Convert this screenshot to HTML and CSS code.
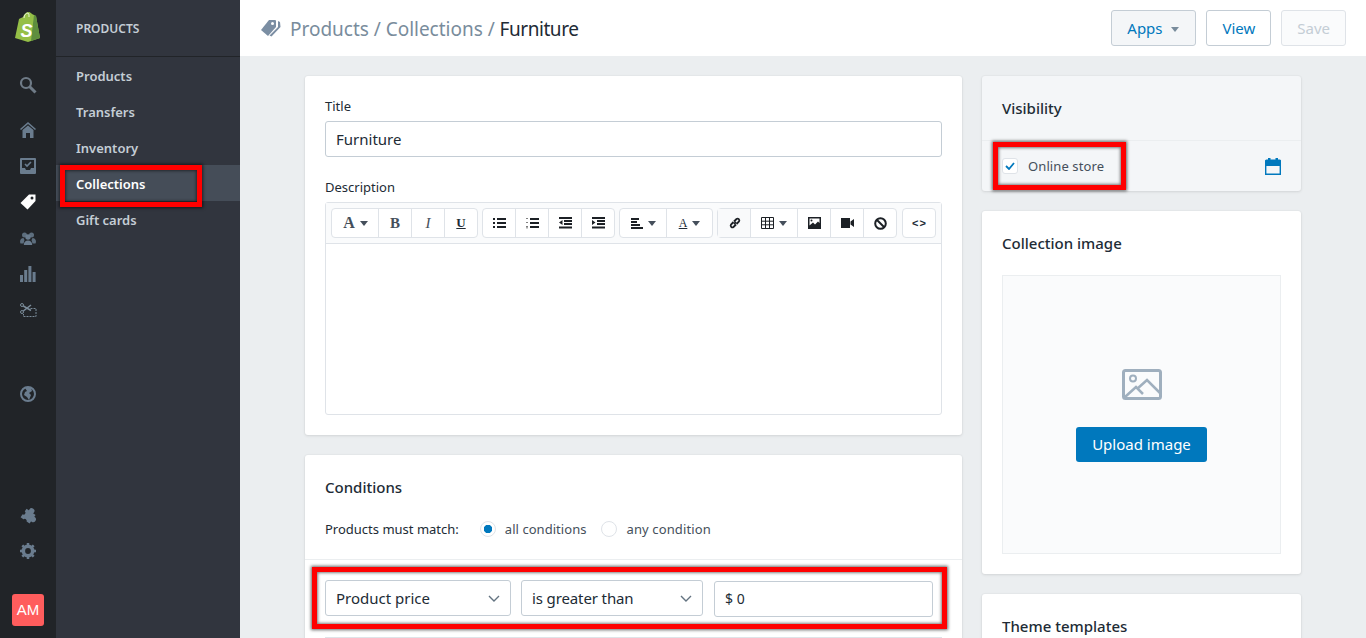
FILE: index.html
```html
<!DOCTYPE html>
<html lang="en">
<head>
<meta charset="utf-8">
<title>Furniture</title>
<link rel="stylesheet" href="styles.css">
</head>
<body>
<div class="app">
  <nav class="rail">
    <div class="logo">
      <svg width="28" height="30" viewBox="0 0 28 30"><path d="M1 26 5 7c1-1 3-1 4-2 1-3 3-5 6-5 1 0 2 1 3 2l2 1 2 1 4 22-12 4z" fill="#95bf47"/><path d="M20 3l2 1 4 22-9 3 3-26z" fill="#5e8e3e"/><path d="M10 6c0-3 2-5 4-5M15 5c0-2 0-3-1-4" fill="none" stroke="#fff" stroke-width=".8"/><text x="6.500" y="25" class="logo-s">S</text></svg>
    </div>
    <a class="rail-item rail-search"><svg width="18" height="18" viewBox="0 0 18 18"><circle cx="7" cy="7" r="5" fill="none" stroke="#6f7b87" stroke-width="2.200"/><path d="M10.500 10.500 16.500 16.500" stroke="#6f7b87" stroke-width="3"/></svg></a>
    <a class="rail-item"><svg width="16" height="16" viewBox="0 0 16 16"><path d="M8 0 0 7l1 1 7-6 7 6 1-1z" fill="#6a7c8e"/><path d="M2.500 8 8 3.500 13.500 8v8H10v-5H6v5H2.500z" fill="#6a7c8e"/></svg></a>
    <a class="rail-item"><svg width="16" height="16" viewBox="0 0 16 16"><path d="M1 0h14a1 1 0 0 1 1 1v14a1 1 0 0 1-1 1H1a1 1 0 0 1-1-1V1a1 1 0 0 1 1-1zm1 2v8h3l1 2h4l1-2h3V2z" fill="#6a7c8e"/><path d="M5 6l2 2 4-4" fill="none" stroke="#6a7c8e" stroke-width="1.600"/></svg></a>
    <a class="rail-item"><svg width="16" height="16" viewBox="0 0 16 16"><path d="M9 .5h6.500v6.500L7.500 15.500 .5 9z" fill="#fff"/><circle cx="12" cy="4" r="1.500" fill="#212428"/></svg></a>
    <a class="rail-item"><svg width="16" height="13" viewBox="0 0 16 13"><g fill="#5d6e7e"><circle cx="4.500" cy="3" r="2.500"/><circle cx="11.500" cy="3" r="2.500"/><path d="M0 10c0-2.500 1.500-4 3.500-4l1 2-1 3.500H.5zM16 10c0-2.500-1.500-4-3.500-4l-1 2 1 3.500h3z"/></g><g fill="#6a7c8e"><circle cx="8" cy="5" r="2.700"/><path d="M3.800 13c0-3 1.700-4.500 4.200-4.500s4.200 1.500 4.200 4.500z"/></g></svg></a>
    <a class="rail-item"><svg width="16" height="16" viewBox="0 0 16 16"><path d="M0 9h3v7H0zM4.200 4h3v12h-3zM8.400 0h3v16h-3zM12.600 6h3v10h-3z" fill="#6a7c8e"/></svg></a>
    <a class="rail-item"><svg width="17" height="14" viewBox="0 0 17 14"><g fill="none" stroke="#7a8b99"><circle cx="2" cy="2" r="1.500"/><circle cx="2" cy="9" r="1.500"/><path d="M3.300 3 11 7.500M3.300 8 11 2" stroke-width="1.500"/><path d="M10.500 5.500h5.500v8H3.500V11" stroke-dasharray="2 1"/></g></svg></a>
    <a class="rail-item rail-globe"><svg width="16" height="16" viewBox="0 0 16 16"><circle cx="8" cy="8" r="7" fill="#212428" stroke="#6a7c8e" stroke-width="2"/><path d="M5 2h6l1 3-3 2 2 2-2 5-2-3-3-2 1-3 2-1z" fill="#6a7c8e"/></svg></a>
    <a class="rail-item rail-puzzle"><svg width="17" height="17" viewBox="0 0 17 17"><g transform="rotate(35 8.500 8.500)"><rect x="3" y="4" width="11" height="10.500" fill="#6a7c8e"/><circle cx="8.500" cy="3" r="2.800" fill="#6a7c8e"/><circle cx="14.500" cy="9" r="2.800" fill="#6a7c8e"/><circle cx="3" cy="9" r="1.800" fill="#212428"/><circle cx="8.500" cy="14.800" r="1.800" fill="#212428"/></g></svg></a>
    <a class="rail-item"><svg width="16" height="16" viewBox="0 0 16 16"><circle cx="8" cy="8" r="4.700" fill="none" stroke="#6a7c8e" stroke-width="3.600"/><path d="M8 0v3M8 13v3M0 8h3M13 8h3M2.300 2.300l2.200 2.200M11.500 11.500l2.200 2.200M2.300 13.700l2.200-2.200M11.500 4.500l2.200-2.200" stroke="#6a7c8e" stroke-width="2.500"/></svg></a>
    <div class="avatar">AM</div>
  </nav>

  <aside class="subnav">
    <div class="subnav-head">PRODUCTS</div>
    <ul class="subnav-list">
      <li class="subnav-item">Products</li>
      <li class="subnav-item">Transfers</li>
      <li class="subnav-item">Inventory</li>
      <li class="subnav-item is-active">Collections</li>
      <li class="subnav-item">Gift cards</li>
    </ul>
  </aside>

  <div class="content">
    <header class="topbar">
      <svg class="crumb-icon" width="21" height="17" viewBox="0 0 21 17"><path d="M9 0h6a1 1 0 0 1 1 1v6l-8 9-7-6z" fill="#7b8ea3"/><circle cx="12.500" cy="3.500" r="1.500" fill="#fff"/><path d="M18 1l2 1 .5 5-9 9.500-2-1L18 7z" fill="#7b8ea3"/></svg>
      <div class="crumbs">Products / Collections / <span class="crumb-current">Furniture</span></div>
      <div class="top-actions">
        <button class="btn btn-tinted">Apps <span class="caret caret-grey"></span></button>
        <button class="btn">View</button>
        <button class="btn btn-disabled">Save</button>
      </div>
    </header>

    <main class="page">
      <div class="col-main">
        <section class="card card-details">
          <label class="field-label">Title</label>
          <div class="input input-title">Furniture</div>
          <label class="field-label field-label-desc">Description</label>
          <div class="editor">
            <div class="toolbar">
              <div class="tool-group">
                <span class="tool tool-wide"><b class="t-a">A</b><span class="caret"></span></span>
                <span class="tool"><b class="t-serif">B</b></span>
                <span class="tool"><i class="t-serif">I</i></span>
                <span class="tool"><b class="t-u">U</b></span>
              </div>
              <div class="tool-group">
                <span class="tool"><svg width="13" height="12" viewBox="0 0 13 12"><path d="M0 1h2v2H0zM4 1h9v2H4zM0 5h2v2H0zM4 5h9v2H4zM0 9h2v2H0zM4 9h9v2H4z" fill="#1c2025"/></svg></span>
                <span class="tool"><svg width="13" height="12" viewBox="0 0 13 12"><path d="M4 1h9v2H4zM4 5h9v2H4zM4 9h9v2H4z" fill="#1c2025"/><path d="M0 1h2v.8H0zM0 5h2v.8H0zM0 9h2v.8H0zM0 10.500h2v.8H0z" fill="#555"/></svg></span>
                <span class="tool"><svg width="13" height="12" viewBox="0 0 13 12"><path d="M0 0h13v2H0zM5 3h8v2H5zM5 6h8v2H5zM0 9.500h13v2H0zM3.500 3v5L0 5.500z" fill="#1c2025"/></svg></span>
                <span class="tool"><svg width="13" height="12" viewBox="0 0 13 12"><path d="M0 0h13v2H0zM5 3h8v2H5zM5 6h8v2H5zM0 9.500h13v2H0zM0 3v5l3.500-2.500z" fill="#1c2025"/></svg></span>
              </div>
              <div class="tool-group">
                <span class="tool tool-wide"><svg width="12" height="11" viewBox="0 0 12 11"><path d="M0 0h8v2H0zM0 3h6v2H0zM0 6h9v2H0zM0 9h12v2H0z" fill="#1c2025"/></svg><span class="caret"></span></span>
                <span class="tool tool-wide tool-color"><span class="t-color">A</span><span class="caret"></span></span>
              </div>
              <div class="tool-group">
                <span class="tool tool-tint"><svg width="12" height="12" viewBox="0 0 12 12"><path d="M5 7l2-2M4.500 5 2 7.500a1.800 1.800 0 0 0 2.500 2.500L7 7.500M5 4.500 7.500 2A1.800 1.800 0 0 1 10 4.500L7.500 7" fill="none" stroke="#1c2025" stroke-width="1.800"/></svg></span>
                <span class="tool tool-wide"><svg width="13" height="12" viewBox="0 0 13 12"><path d="M.5.500h12v11H.5zM.5 4.200h12M.5 7.800h12M4.500.500v11M8.500.500v11" fill="none" stroke="#1c2025"/></svg><span class="caret"></span></span>
                <span class="tool"><svg width="13" height="12" viewBox="0 0 13 12"><path d="M0 0h13v12H0zM1.500 1.500v7L5 5.500l2 2 3-3 1.500 1.500v-4.500z" fill="#1c2025" fill-rule="evenodd"/><circle cx="3.500" cy="3.500" r="1" fill="#1c2025"/></svg></span>
                <span class="tool"><svg width="13" height="10" viewBox="0 0 13 10"><path d="M0 0h9v10H0zM9.500 3.500 13 1v8L9.500 6.500z" fill="#1c2025"/></svg></span>
                <span class="tool"><svg width="13" height="13" viewBox="0 0 13 13"><circle cx="6.500" cy="6.500" r="5.300" fill="none" stroke="#1c2025" stroke-width="2"/><path d="M3 3l7 7" stroke="#1c2025" stroke-width="2"/></svg></span>
              </div>
              <div class="tool-group tool-group-last">
                <span class="tool t-code">&lt;&gt;</span>
              </div>
            </div>
            <div class="editor-body"></div>
          </div>
        </section>

        <section class="card card-conditions">
          <div class="cond-top">
            <h2 class="card-title">Conditions</h2>
            <div class="match-row">
              <span class="match-label">Products must match:</span>
              <span class="radio is-on"></span><span class="radio-text">all conditions</span>
              <span class="radio"></span><span class="radio-text">any condition</span>
            </div>
          </div>
          <div class="cond-rows">
            <div class="cond-row">
              <div class="select select-a">Product price<svg class="chev" width="12" height="7" viewBox="0 0 12 7"><path d="M1 1l5 5 5-5" fill="none" stroke="#637381" stroke-width="1.400"/></svg></div>
              <div class="select select-b">is greater than<svg class="chev" width="12" height="7" viewBox="0 0 12 7"><path d="M1 1l5 5 5-5" fill="none" stroke="#637381" stroke-width="1.400"/></svg></div>
              <div class="input input-val">$ 0</div>
            </div>
          </div>
        </section>
      </div>

      <div class="col-side">
        <section class="card card-visibility">
          <h2 class="card-title vis-title">Visibility</h2>
          <div class="vis-row">
            <span class="check"><svg width="10" height="8" viewBox="0 0 10 8"><path d="M1 4l3 3 5-6" fill="none" stroke="#0078bd" stroke-width="1.800"/></svg></span>
            <span class="vis-label">Online store</span>
            <svg class="cal" width="16" height="17" viewBox="0 0 16 17"><path d="M1.500 2.500h13a1 1 0 0 1 1 1v12a1 1 0 0 1-1 1h-13a1 1 0 0 1-1-1v-12a1 1 0 0 1 1-1zM.500 7h15" fill="none" stroke="#0078bd" stroke-width="1.800"/><path d="M1 3h14v4H1zM3 0h2.500v3H3zM10.500 0H13v3h-2.500z" fill="#0078bd"/></svg>
          </div>
        </section>

        <section class="card card-image">
          <h2 class="card-title">Collection image</h2>
          <div class="dropzone">
            <svg width="40" height="31" viewBox="0 0 40 31"><rect x="1.500" y="1.500" width="37" height="28" rx="2" fill="none" stroke="#9fafbe" stroke-width="3"/><circle cx="11" cy="9.500" r="3" fill="none" stroke="#9fafbe" stroke-width="2"/><path d="M3 28 14 18l7 7M15 20l10-9 13 13" fill="none" stroke="#9fafbe" stroke-width="2.500"/></svg>
            <button class="btn-primary">Upload image</button>
          </div>
        </section>

        <section class="card card-theme">
          <h2 class="card-title">Theme templates</h2>
        </section>
      </div>
    </main>
  </div>
</div>
<div class="mark mark-collections"></div>
<div class="mark mark-online"></div>
<div class="mark mark-cond"></div>
</body>
</html>
```
FILE: styles.css
```css
* { box-sizing: border-box; }
html, body { margin: 0; height: 100%; overflow: hidden; }
body { font-family: "Noto Sans", "Open Sans", sans-serif; color: #212b35; position: relative; }
.app { display: flex; height: 638px; overflow: hidden; }

.rail { width: 56px; flex: none; background: #212428; display: flex; flex-direction: column; align-items: center; }
.logo { height: 56px; padding-top: 12px; display: flex; justify-content: center; width: 100%; }
.logo-s { font: italic 700 18px "Liberation Sans", sans-serif; fill: #fff; }
.rail-item { height: 36px; width: 100%; display: flex; align-items: center; justify-content: center; flex: none; }
.rail-search { margin-top: 11px; margin-bottom: 9px; }
.rail-globe { margin-top: 48px; }
.rail-puzzle { margin-top: auto; }
.avatar { width: 32px; height: 32px; margin: 25px 0 12px; background: #ff5d5d; border-radius: 3px; color: #fff; font: 15px/32px "Liberation Sans", sans-serif; text-align: center; }

.subnav { width: 184px; flex: none; background: #31353e; color: #c4cdd5; }
.subnav-head { height: 57px; padding: 0 20px; border-bottom: 1px solid #212428; font-size: 12px; font-weight: 600; line-height: 57px; }
.subnav-list { list-style: none; margin: 0; padding: 0; }
.subnav-item { height: 36px; padding: 0 20px; font-size: 13px; font-weight: 600; line-height: 38px; }
.subnav-item.is-active { background: #454d58; color: #fff; }

.content { flex: 1; min-width: 0; background: #ebeef0; }
.topbar { height: 56px; background: #fff; display: flex; align-items: center; padding: 0 20px; }
.crumb-icon { flex: none; margin-right: 9px; }
.crumbs { font-size: 19px; line-height: 28px; padding-top: 2px; color: #798c9c; letter-spacing: -.02px; }
.crumb-current { color: #212b35; letter-spacing: -.45px; }
.top-actions { margin-left: auto; display: flex; gap: 10px; }
.btn { height: 36px; padding: 0 15px; border: 1px solid #c4cdd5; border-radius: 3px; background: #fff; color: #0078bd; font: 15px "Noto Sans", sans-serif; }
.btn-tinted { background: #f4f6f8; }
.btn-disabled { background: #fafbfc; color: #c4cdd5; border-color: #dfe3e8; }
.caret { display: inline-block; width: 0; height: 0; border: 4px solid transparent; border-top: 5px solid #454f5b; border-bottom: 0; vertical-align: middle; }
.caret-grey { border-top-color: #798c9c; margin-left: 5px; margin-right: 1px; }

.page { display: flex; gap: 20px; padding: 20px 65px; }
.col-main { width: 657px; flex: none; display: flex; flex-direction: column; gap: 20px; }
.col-side { width: 319px; flex: none; display: flex; flex-direction: column; gap: 20px; }
.card { background: #fff; border-radius: 3px; box-shadow: 0 0 0 1px rgba(63,63,68,.02), 0 1px 3px rgba(63,63,68,.12); flex: none; }
.card-title { margin: 0; font-size: 15px; font-weight: 500; line-height: 24px; }

.card-details { height: 359px; padding: 20px; }
.field-label { display: block; font-size: 13px; line-height: 20px; }
.input { height: 36px; border: 1px solid #c4cdd5; border-radius: 3px; background: #fff; padding: 0 10px; font-size: 15px; line-height: 34px; }
.input-title { margin-top: 5px; }
.field-label-desc { margin-top: 20px; }
.editor { margin-top: 5px; height: 213px; border: 1px solid #dfe3e8; border-radius: 3px; }
.toolbar { height: 41px; background: #fafbfc; border-bottom: 1px solid #dfe3e8; display: flex; gap: 4px; padding: 5px; }
.tool-group { display: flex; height: 30px; border: 1px solid #dfe3e8; border-radius: 4px; background: #fff; }
.tool-group-last { margin-left: 1px; }
.tool { width: 33px; display: flex; align-items: center; justify-content: center; gap: 5px; border-left: 1px solid #dfe3e8; color: #212b35; font-size: 13px; }
.tool-wide { width: 47px; }
.tool-color { width: 46px; }
.tool:first-child { border-left: 0; margin-right: -1px; }
.tool-tint { background: #f9fafb; }
.t-a { font: 700 16px "Liberation Serif", serif; color: #454f5b; }
.t-serif { font: 700 15px "Liberation Serif", serif; color: #454f5b; }
i.t-serif { font-weight: 400; font-style: italic; }
.t-u { font: 700 13px "Liberation Serif", serif; text-decoration: underline; }
.t-color { font: 400 12px "Liberation Serif", serif; text-decoration: underline; }
.t-code { font: 700 11px "Liberation Sans", sans-serif; letter-spacing: 1px; }
.editor-body { height: 170px; }

.card-conditions { height: 220px; }
.cond-top { height: 105px; padding: 20px 20px 0; border-bottom: 1px solid #ebeef0; }
.match-row { display: flex; align-items: center; margin-top: 20px; font-size: 13px; height: 20px; }
.match-label { margin-right: 21px; }
.radio { width: 16px; height: 16px; border: 1px solid #dfe3e8; border-radius: 50%; background: #fff; flex: none; margin-right: 10px; }
.radio.is-on { margin-right: 9px; background: #fff radial-gradient(circle, #0078bd 0 4px, transparent 4.500px); }
.radio-text { margin-right: 14px; color: #454f5b; letter-spacing: .05px; }
.radio-text:last-child { letter-spacing: .12px; }
.cond-rows { padding: 20px 20px 0; }
.cond-row { display: flex; gap: 10px; height: 58px; padding-right: 9px; border-bottom: 1px solid #dfe3e8; }
.select { height: 36px; border: 1px solid #c4cdd5; border-radius: 3px; padding: 0 10px; font-size: 15px; line-height: 34px; display: flex; justify-content: space-between; align-items: center; }
.select-a { width: 186px; }
.select-b { width: 182px; letter-spacing: -.12px; }
.input-val { flex: 1; margin: 1px 0 0 1px; font-size: 14px; }

.card-visibility { height: 115px; background: #f4f6f8; }
.vis-title { height: 65px; padding: 20px; border-bottom: 1px solid #ebeef0; }
.vis-row { display: flex; align-items: center; height: 50px; padding: 0 20px; }
.check { width: 16px; height: 16px; background: #fff; border: 1px solid #dfe3e8; border-radius: 3px; display: flex; align-items: center; justify-content: center; margin-right: 10px; }
.vis-label { font-size: 13px; color: #454f5b; letter-spacing: .1px; }
.cal { margin-left: auto; }

.card-image { height: 363px; padding: 20px; }
.dropzone { margin-top: 20px; height: 279px; border: 1px solid #ebeef0; background: #fafbfc; display: flex; flex-direction: column; align-items: center; padding-top: 93px; }
.btn-primary { margin-top: 27px; height: 35px; width: 131px; padding: 0 0 2px; border: 0; border-radius: 3px; background: #0078bd; color: #fff; font: 15px "Noto Sans", sans-serif; }
.card-theme { height: 120px; padding: 20px; }

.mark { position: absolute; border: 5px solid #f00; box-shadow: 0 0 3px 1px rgba(0,0,0,.6), inset 0 0 3px 1px rgba(0,0,0,.5); }
.mark-collections { left: 60px; top: 165px; width: 142px; height: 42px; }
.mark-online { left: 993px; top: 142px; width: 133px; height: 48px; }
.mark-cond { left: 312px; top: 567px; width: 635px; height: 62px; }
```
